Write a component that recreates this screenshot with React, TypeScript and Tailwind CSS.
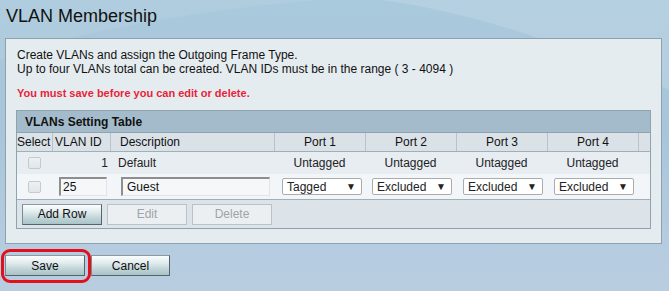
import React from "react";

const font = { fontFamily: '"Liberation Sans", Arial, sans-serif' };

function Btn({ label, disabled, w = "w-[80px]" }: { label: string; disabled?: boolean; w?: string }) {
  if (disabled) {
    return (
      <div className={`${w} h-[21px] flex items-center justify-center border border-[#b9c3c8] bg-[#eceff1] text-[12px] text-[#9ca5aa]`}>
        {label}
      </div>
    );
  }
  return (
    <div
      className={`${w} h-[21px] flex items-center justify-center border border-[#56636a] border-t-[#8c999f] border-l-[#7d8a90] bg-[linear-gradient(180deg,#fbfdfd_0%,#e2ecee_35%,#bfd3d6_70%,#a9c3c7_100%)] text-[12px] text-[#111]`}
    >
      {label}
    </div>
  );
}

function Sel({ value }: { value: string }) {
  return (
    <div className="w-[80px] h-[17px] flex items-center justify-between border border-[#a9adb0] rounded-[2px] bg-white pl-[4px] pr-[5px] text-[12px] text-[#222]">
      <span>{value}</span>
      <span className="text-[10px] leading-none">▼</span>
    </div>
  );
}

function Check() {
  return <div className="w-[13px] h-[12px] rounded-[2px] border border-[#c3cbd0] bg-[linear-gradient(180deg,#eef1f3,#e1e6e9)]" />;
}

const cols = "grid grid-cols-[35px_58px_164px_91px_91px_91px_91px_12px]";

export default function App() {
  return (
    <div
      style={font}
      className="relative w-[669px] h-[291px] overflow-hidden bg-[linear-gradient(180deg,#a9c9dc_0%,#a8c5da_45%,#b5cbdf_80%,#b8cde0_100%)]"
    >
      <svg className="absolute left-0 top-0" width="669" height="120" viewBox="0 0 669 120">
        <path d="M380 0 C460 10 560 40 669 90 L669 0 Z" fill="#ffffff" opacity="0.14" />
        <path d="M0 0 L0 60 C80 30 200 10 320 0 Z" fill="#ffffff" opacity="0.08" />
      </svg>

      <div className="relative">
        <div className="pl-[6px] pt-[5px] text-[18px] leading-[22px] text-[#111]">VLAN Membership</div>

        <div className="ml-[5px] mt-[11px] w-[657px] h-[206px] border border-[#8da2ae] bg-[#e5ecf0]">
          <div className="pl-[11px] pt-[9px] text-[12px] leading-[14px] text-[#111]">
            <div>Create VLANs and assign the Outgoing Frame Type.</div>
            <div>Up to four VLANs total can be created. VLAN IDs must be in the range ( 3 - 4094 )</div>
            <div className="mt-[11px] text-[11px] leading-[13px] font-bold text-[#e81f3a]">
              You must save before you can edit or delete.
            </div>
          </div>

          <div className="ml-[10px] mt-[10px] w-[635px] border border-[#8ea3ae]">
            <div className="h-[22px] bg-[#a3bbca] pl-[8px] flex items-center text-[12px] font-bold text-[#111] border-b border-[#8ea3ae]">
              VLANs Setting Table
            </div>
            <div className={`${cols} h-[19px] bg-[#dae2e8] text-[12px] text-[#111] border-b border-[#9fb0bb]`}>
              <div className="flex items-center">Select</div>
              <div className="flex items-center pl-[2px] border-l border-[#b4c3cc]">VLAN ID</div>
              <div className="flex items-center pl-[9px] border-l border-[#b4c3cc]">Description</div>
              <div className="flex items-center justify-center border-l border-[#b4c3cc]">Port 1</div>
              <div className="flex items-center justify-center border-l border-[#b4c3cc]">Port 2</div>
              <div className="flex items-center justify-center border-l border-[#b4c3cc]">Port 3</div>
              <div className="flex items-center justify-center border-l border-[#b4c3cc]">Port 4</div>
              <div className="border-l border-[#b4c3cc]" />
            </div>
            <div className={`${cols} h-[22px] bg-[#e8edf2] text-[12px] text-[#222]`}>
              <div className="flex items-center justify-center"><Check /></div>
              <div className="flex items-center justify-end pr-[2px]">1</div>
              <div className="flex items-center pl-[8px]">Default</div>
              <div className="flex items-center justify-center">Untagged</div>
              <div className="flex items-center justify-center">Untagged</div>
              <div className="flex items-center justify-center">Untagged</div>
              <div className="flex items-center justify-center">Untagged</div>
              <div />
            </div>
            <div className={`${cols} h-[26px] bg-[#f3f6f9] text-[12px] text-[#111] border-b border-[#9fb0bb]`}>
              <div className="flex items-center justify-center"><Check /></div>
              <div className="flex items-center pl-[7px]">
                <div className="w-[48px] h-[19px] flex items-center pl-[2px] border-t-2 border-l-2 border-r border-b border-t-[#8e8e8e] border-l-[#8e8e8e] border-r-[#e2e4e6] border-b-[#e2e4e6] bg-[#f5f7f9]">25</div>
              </div>
              <div className="flex items-center pl-[11px]">
                <div className="w-[149px] h-[19px] flex items-center pl-[4px] border-t-2 border-l-2 border-r border-b border-t-[#8e8e8e] border-l-[#8e8e8e] border-r-[#e2e4e6] border-b-[#e2e4e6] bg-[#f5f7f9]">Guest</div>
              </div>
              <div className="flex items-center pl-[8px]"><Sel value="Tagged" /></div>
              <div className="flex items-center pl-[7px]"><Sel value="Excluded" /></div>
              <div className="flex items-center pl-[7px]"><Sel value="Excluded" /></div>
              <div className="flex items-center pl-[7px]"><Sel value="Excluded" /></div>
              <div />
            </div>
            <div className="h-[28px] bg-[#dce3e9] flex items-center pl-[5px] gap-[5px]">
              <Btn label="Add Row" />
              <Btn label="Edit" disabled />
              <Btn label="Delete" disabled />
            </div>
          </div>
        </div>

        <div className="ml-[5px] mt-[11px] flex gap-[6px]">
          <Btn label="Save" />
          <Btn label="Cancel" w="w-[79px]" />
        </div>
      </div>

      <div className="absolute left-[1px] top-[249px] w-[90px] h-[34px] rounded-[9px] border-[3px] border-[#e3101c]" />
    </div>
  );
}
